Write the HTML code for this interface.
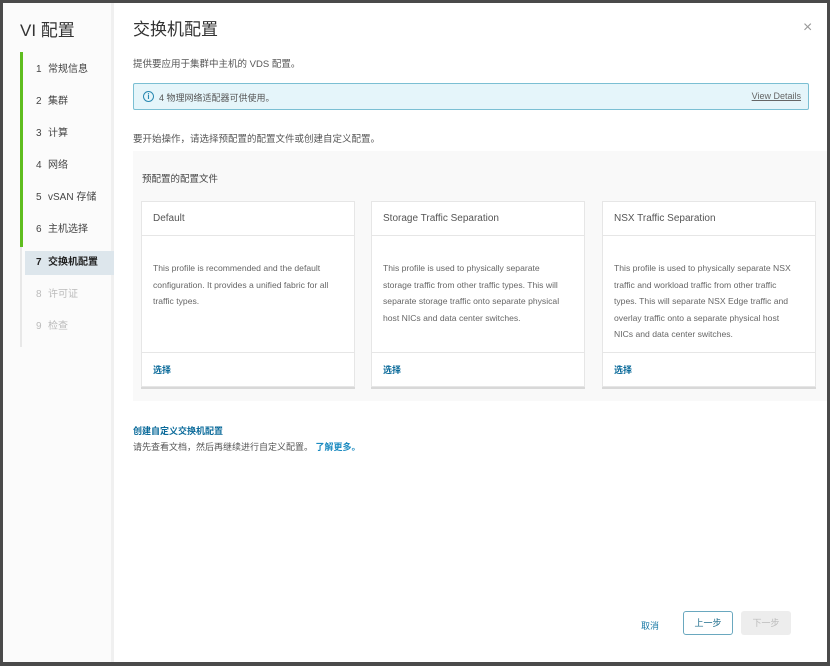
<!DOCTYPE html>
<html><head><meta charset="utf-8"><style>
*{margin:0;padding:0;box-sizing:border-box}
body{width:830px;height:666px;background:#4a4a4a;font-family:"Liberation Sans","Noto Sans CJK SC",sans-serif;position:relative;overflow:hidden}
.win{position:absolute;left:3px;top:3px;width:824px;height:659px;background:#fff}
.side{position:absolute;left:0;top:0;width:111px;height:659px;background:#fbfbfb;border-right:3px solid #f0f0f0}
.side h1{position:absolute;left:17px;top:13px;font-size:17px;font-weight:normal;color:#333}
.bar{position:absolute;left:17px;top:49px;width:3px;height:195px;background:#5fbd1f}
.bar2{position:absolute;left:17px;top:244px;width:2px;height:100px;background:#e8e8e8}
.it{position:absolute;left:22px;width:89px;height:24px;font-size:10px;color:#444;line-height:24px;padding-left:11px}
.it span{display:inline-block;width:12px}
.it.act{background:#dde6ec;font-weight:bold;color:#222}
.it.dis{color:#bbb}
.abs{position:absolute}
.card{position:absolute;top:198px;width:214px;height:186px;background:#fff;border:1px solid #e6e6e6;box-shadow:0 2px 0 #d8d8d8}
.card .h{height:34px;border-bottom:1px solid #e6e6e6;font-size:10px;color:#555;padding:11px 0 0 11px}
.card .b{height:117px;border-bottom:1px solid #e6e6e6;font-size:8.6px;color:#666;line-height:16.5px;padding:24px 0 0 11px;white-space:nowrap}
.card .f{font-size:9px;color:#0a6a9a;font-weight:bold;padding:10px 0 0 11px}
</style></head><body>
<div class="win">
<div class="side">
<h1>VI 配置</h1>
<div class="bar"></div><div class="bar2"></div>
<div class="it" style="top:55px"><span>1</span>常规信息</div>
<div class="it" style="top:87px"><span>2</span>集群</div>
<div class="it" style="top:119px"><span>3</span>计算</div>
<div class="it" style="top:151px"><span>4</span>网络</div>
<div class="it" style="top:183px"><span>5</span>vSAN 存储</div>
<div class="it" style="top:215px"><span>6</span>主机选择</div>
<div class="it act" style="top:248px"><span>7</span>交换机配置</div>
<div class="it dis" style="top:280px"><span>8</span>许可证</div>
<div class="it dis" style="top:312px"><span>9</span>检查</div>
</div>
<div class="abs" style="left:130px;top:12px;font-size:17px;color:#333">交换机配置</div>
<div class="abs" style="left:800px;top:16px;font-size:16px;color:#999">×</div>
<div class="abs" style="left:130px;top:53px;font-size:9.5px;color:#555">提供要应用于集群中主机的 VDS 配置。</div>
<div class="abs" style="left:130px;top:80px;width:676px;height:27px;background:#e5f5fa;border:1px solid #7bbfd3;border-radius:2px">
 <div class="abs" style="left:9px;top:7px;width:11px;height:11px;border:1.3px solid #2a89b1;border-radius:50%;font-size:8px;color:#2a89b1;text-align:center;line-height:9px;font-weight:bold">i</div>
 <div class="abs" style="left:25px;top:7px;font-size:9px;color:#555">4 物理网络适配器可供使用。</div>
 <div class="abs" style="right:7px;top:7px;font-size:9px;color:#666;text-decoration:underline">View Details</div>
</div>
<div class="abs" style="left:130px;top:128px;font-size:9.5px;color:#555">要开始操作，请选择预配置的配置文件或创建自定义配置。</div>
<div class="abs" style="left:130px;top:148px;width:694px;height:250px;background:#f9f9f9"></div>
<div class="abs" style="left:139px;top:168px;font-size:9.5px;color:#444">预配置的配置文件</div>
<div class="card" style="left:138px"><div class="h">Default</div><div class="b">This profile is recommended and the default<br>configuration. It provides a unified fabric for all<br>traffic types.</div><div class="f">选择</div></div>
<div class="card" style="left:368px"><div class="h">Storage Traffic Separation</div><div class="b">This profile is used to physically separate<br>storage traffic from other traffic types. This will<br>separate storage traffic onto separate physical<br>host NICs and data center switches.</div><div class="f">选择</div></div>
<div class="card" style="left:599px"><div class="h">NSX Traffic Separation</div><div class="b">This profile is used to physically separate NSX<br>traffic and workload traffic from other traffic<br>types. This will separate NSX Edge traffic and<br>overlay traffic onto a separate physical host<br>NICs and data center switches.</div><div class="f">选择</div></div>
<div class="abs" style="left:130px;top:421px;font-size:9px;color:#0a6a9a;font-weight:bold">创建自定义交换机配置</div>
<div class="abs" style="left:130px;top:437px;font-size:9px;color:#555">请先查看文档，然后再继续进行自定义配置。 <span style="color:#1a8ac0;font-weight:bold">了解更多。</span></div>
<div class="abs" style="left:638px;top:616px;font-size:9px;color:#1a7aa6">取消</div>
<div class="abs" style="left:680px;top:608px;width:50px;height:24px;border:1px solid #6aa8bf;border-radius:3px;font-size:9px;color:#1a6a8a;text-align:center;line-height:22px">上一步</div>
<div class="abs" style="left:738px;top:608px;width:50px;height:24px;background:#ededed;border-radius:3px;font-size:9px;color:#bbb;text-align:center;line-height:24px">下一步</div>
</div>
</body></html>
